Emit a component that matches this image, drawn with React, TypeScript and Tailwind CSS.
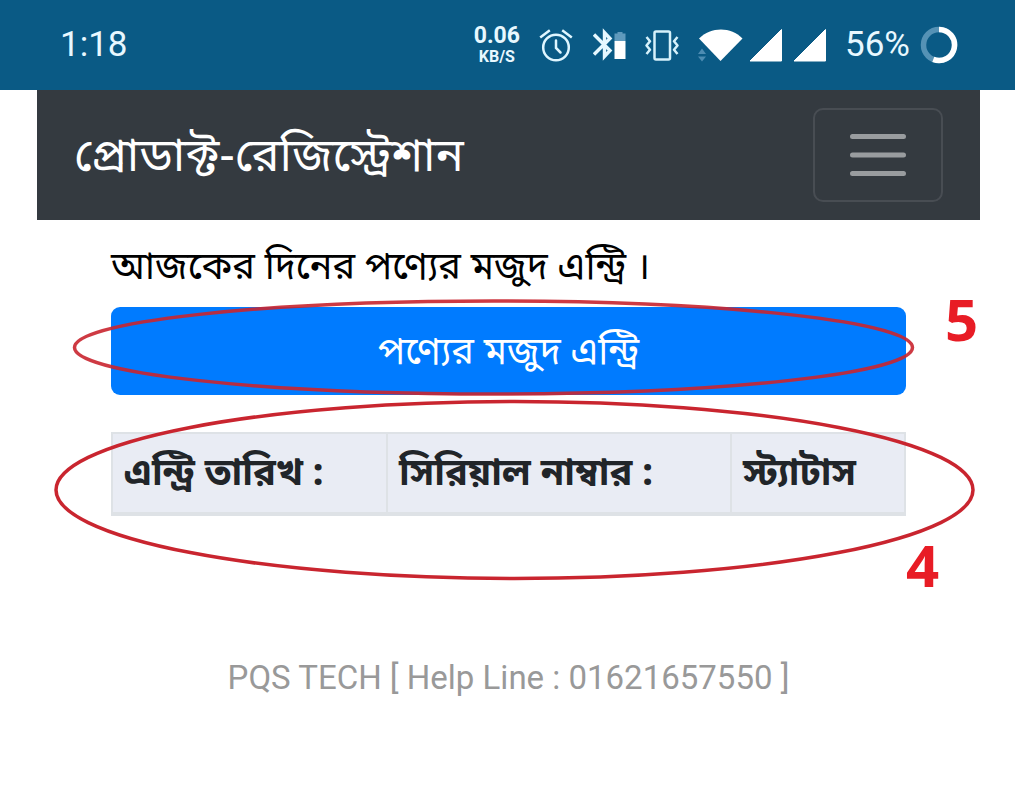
function AlarmIcon() {
  return (
    <svg viewBox="0 0 34 34" className="h-[34px] w-[34px]" fill="none" stroke="#dff6ff" strokeWidth="2.5" strokeLinecap="round" aria-hidden="true">
      <circle cx="17" cy="19.5" r="12.8" />
      <path d="M17 12.5V20l4.500 4.500" />
      <path d="M1.200 9.500 10.800 2.200M32.800 9.500 23.200 2.200" strokeLinecap="butt" />
    </svg>
  );
}

function BluetoothBatteryIcon() {
  return (
    <svg viewBox="0 0 34 34" className="h-[34px] w-[34px]" fill="none" aria-hidden="true">
      <path d="M1 6.500 17 22.500 11.500 28.500V4.500L17 10.500 1 26.500" stroke="#e6f8ff" strokeWidth="3.400" />
      <path d="M21.500 13V5.500h3V4h5v1.500h3V13Z" fill="#5f9abd" />
      <path d="M21.500 13h11v18h-11Z" fill="#fff" />
    </svg>
  );
}

function VibrateIcon() {
  return (
    <svg viewBox="0 0 34 34" className="h-[34px] w-[34px]" fill="none" stroke="#d5f1fb" strokeWidth="2.500" strokeLinejoin="round" aria-hidden="true">
      <rect x="9.500" y="3.500" width="15.500" height="28" rx="1.500" />
      <path d="m1.500 9 3.500 4.200-3.500 4.300L5 21.700 1.500 26M32.500 9 29 13.200l3.500 4.300-3.500 4.200 3.500 4.300" />
    </svg>
  );
}

function WifiIcon() {
  return (
    <svg viewBox="0 0 46 34" className="h-[34px] w-[46px]" aria-hidden="true">
      <path d="M2 10.500C14-1.500 34-1.500 45.500 10.500L23.500 33Z" fill="#fff" />
      <path d="m5 20.500 4 5.500H1ZM1 28.500h8L5 33.500Z" fill="#4d8cb2" />
    </svg>
  );
}

function SignalIcon() {
  return (
    <svg viewBox="0 0 34 34" className="h-[34px] w-[34px]" aria-hidden="true">
      <path d="M32.500 1.500v31.500H1Z" fill="#fff" stroke="#fff" strokeLinejoin="round" />
    </svg>
  );
}

function BatteryRing() {
  return (
    <svg viewBox="0 0 38 38" className="h-[38px] w-[38px]" fill="none" strokeWidth="5.500" aria-hidden="true">
      <circle cx="19" cy="19" r="15.500" stroke="#5592b5" />
      <path d="M19 3.500a15.500 15.500 0 1 1-5.700 29.900" stroke="#fff" />
    </svg>
  );
}

function StatusBar() {
  return (
    <div className="flex h-[90px] items-center justify-between bg-[#0a5a85] pr-[57px] pl-[60px] font-[Roboto,sans-serif] text-[35px] text-[#e8f8ff]">
      <time>1:18</time>
      <div className="flex items-center">
        <div className="mr-[19px] text-center font-bold">
          <div className="text-[23px] leading-[24px]">0.06</div>
          <div className="text-[16px] leading-[18px]">KB/S</div>
        </div>
        <div className="mr-[20px]"><AlarmIcon /></div>
        <div className="mr-[18px]"><BluetoothBatteryIcon /></div>
        <div className="mr-[18px]"><VibrateIcon /></div>
        <div className="mr-[6px]"><WifiIcon /></div>
        <div className="mr-[10px]"><SignalIcon /></div>
        <div className="mr-[18px]"><SignalIcon /></div>
        <span className="mr-[10px]">56%</span>
        <BatteryRing />
      </div>
    </div>
  );
}

function Navbar() {
  return (
    <nav className="flex items-center justify-between bg-[#343a40] px-[37px] py-[18px]">
      <a href="#" className="pt-[8px] text-[47px] leading-[70px] text-white">প্রোডাক্ট-রেজিস্ট্রেশান</a>
      <button type="button" aria-label="Menu" className="flex h-[94px] w-[130px] items-center justify-center rounded-[10px] border-2 border-[#484d53]">
        <svg viewBox="0 0 56 44" className="h-[44px] w-[56px]" stroke="#999c9f" strokeWidth="5" strokeLinecap="round" aria-hidden="true">
          <path d="M2.500 3.500h51M2.500 22h51M2.500 40.500h51" />
        </svg>
      </button>
    </nav>
  );
}

const columns = [
  { label: "এন্ট্রি তারিখ :", width: "w-[275px]" },
  { label: "সিরিয়াল নাম্বার :", width: "w-[344px]" },
  { label: "স্ট্যাটাস", width: "" },
];

function EntryTable() {
  return (
    <table className="mt-[37px] w-full border-collapse border-2 border-[#dee2e6] bg-[#e9ecf4] text-left text-[38px] leading-[56px] text-[#212529]">
      <thead>
        <tr>
          {columns.map((c) => (
            <th key={c.label} scope="col" className={`${c.width} border-2 border-b-4 border-[#dee2e6] px-[11px] pt-[14px] pb-[8px] font-bold`}>
              {c.label}
            </th>
          ))}
        </tr>
      </thead>
    </table>
  );
}

function Annotations() {
  return (
    <div className="pointer-events-none absolute inset-0 font-['Open_Sans',sans-serif] text-[58px] leading-[60px] font-bold text-[#e81c25]">
      <svg className="absolute top-0 left-0 h-full w-full" fill="none" stroke="#c9252f" strokeWidth="3.500" aria-hidden="true">
        <ellipse cx="493.500" cy="347.500" rx="419" ry="46.500" opacity="0.900" />
        <ellipse cx="514.500" cy="490" rx="458.500" ry="88.500" />
      </svg>
      <span className="absolute top-[289px] left-[945px]">5</span>
      <span className="absolute top-[535px] left-[906px]">4</span>
    </div>
  );
}

export default function App() {
  return (
    <div className="relative min-h-screen bg-white font-['Noto_Sans_Bengali','Noto_Sans',sans-serif]">
      <StatusBar />
      <div className="pr-[35px] pl-[37px]">
        <Navbar />
        <main className="px-[74px] pt-[22px]">
          <p className="text-[38px] leading-[56px] text-black">আজকের দিনের পণ্যের মজুদ এন্ট্রি ।</p>
          <button type="button" className="mt-[9px] h-[88px] w-full rounded-[9px] bg-[#007bff] pt-[8px] text-[38px] leading-[56px] text-white">
            পণ্যের মজুদ এন্ট্রি
          </button>
          <EntryTable />
        </main>
        <footer className="mt-[134px] pb-[90px] text-center font-[Roboto,sans-serif] text-[33px] leading-[56px] text-[#999999]">
          PQS TECH [ Help Line : 01621657550 ]
        </footer>
      </div>
      <Annotations />
    </div>
  );
}
